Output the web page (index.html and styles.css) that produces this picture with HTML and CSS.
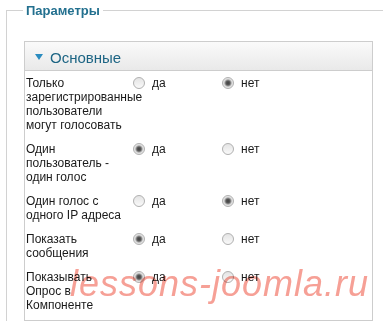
FILE: index.html
```html
<!DOCTYPE html>
<html lang="ru">
<head>
<meta charset="utf-8">
<title>Параметры</title>
<link rel="stylesheet" href="styles.css">
</head>
<body>
<div class="page">
  <fieldset class="params">
    <legend class="params-title">Параметры</legend>
    <div class="panel">
      <div class="panel-head">
        <svg class="caret" width="8" height="6" viewBox="0 0 8 6"><polygon points="0,0 8,0 4,6" fill="#2a8cc0"/></svg>
        <span class="panel-title">Основные</span>
      </div>
      <div class="rows">
        <div class="row">
          <div class="label">Только зарегистрированные пользователи могут голосовать</div>
          <div class="opt"><span class="radio"></span>да</div>
          <div class="opt"><span class="radio checked"></span>нет</div>
        </div>
        <div class="row">
          <div class="label">Один пользователь - один голос</div>
          <div class="opt"><span class="radio checked"></span>да</div>
          <div class="opt"><span class="radio"></span>нет</div>
        </div>
        <div class="row">
          <div class="label">Один голос с одного IP адреса</div>
          <div class="opt"><span class="radio"></span>да</div>
          <div class="opt"><span class="radio checked"></span>нет</div>
        </div>
        <div class="row">
          <div class="label">Показать сообщения</div>
          <div class="opt"><span class="radio checked"></span>да</div>
          <div class="opt"><span class="radio"></span>нет</div>
        </div>
        <div class="row">
          <div class="label">Показывать Опрос в Компоненте</div>
          <div class="opt"><span class="radio checked"></span>да</div>
          <div class="opt"><span class="radio"></span>нет</div>
        </div>
      </div>
    </div>
  </fieldset>
  <div class="watermark">lessons-joomla.ru</div>
</div>
</body>
</html>
```

FILE: styles.css
```css
html, body {
  margin: 0;
  padding: 0;
  background: #fff;
}
.page {
  position: relative;
  width: 383px;
  height: 321px;
  overflow: hidden;
  font-family: "Liberation Sans", Arial, sans-serif;
  color: #1a1a1a;
}
.params {
  margin: 3px 0 0 6px;
  width: 420px;
  padding: 0 0 30px 0;
  border: 1px solid #d2d2d2;
  box-sizing: border-box;
}
.params-title {
  margin-left: 16px;
  padding: 0 3px;
  font-size: 13px;
  line-height: 15px;
  font-weight: bold;
  color: #23708f;
}
.panel {
  margin: 23px 0 0 17px;
  width: 349px;
  border: 1px solid #cdcdcd;
  box-sizing: border-box;
}
.panel-head {
  display: flex;
  align-items: center;
  height: 28px;
  padding-left: 10px;
  border-bottom: 1px solid #cdcdcd;
  background: linear-gradient(#fafafa, #e9e9e9);
}
.caret {
  flex: none;
  margin-right: 7px;
  margin-top: 1px;
}
.panel-title {
  font-size: 15px;
  color: #1d6584;
  margin-top: 3px;
}
.rows {
  padding: 0 0 3px 1px;
}
.row {
  display: flex;
  align-items: flex-start;
  padding: 5px 0;
  font-size: 12px;
  line-height: 14px;
}
.label {
  flex: none;
  width: 100px;
  margin-right: 7px;
}
.opt {
  flex: none;
  display: flex;
  align-items: center;
  width: 89px;
  height: 14px;
}
.radio {
  flex: none;
  width: 12px;
  height: 12px;
  margin-right: 7px;
  border-radius: 50%;
  border: 1px solid #b0b0b0;
  box-sizing: border-box;
  background: linear-gradient(#e4e4e4, #f9f9f9);
}
.radio.checked {
  background: radial-gradient(circle, #3f3f3f 0, #5a5a5a 2px, #9a9a9a 3px, #dcdcdc 4px, #f2f2f2 6px);
}
.watermark {
  position: absolute;
  left: 70px;
  top: 266px;
  font-size: 36px;
  line-height: 36px;
  font-style: italic;
  letter-spacing: 1px;
  color: #f6a096;
  mix-blend-mode: multiply;
  white-space: nowrap;
  pointer-events: none;
}
```
